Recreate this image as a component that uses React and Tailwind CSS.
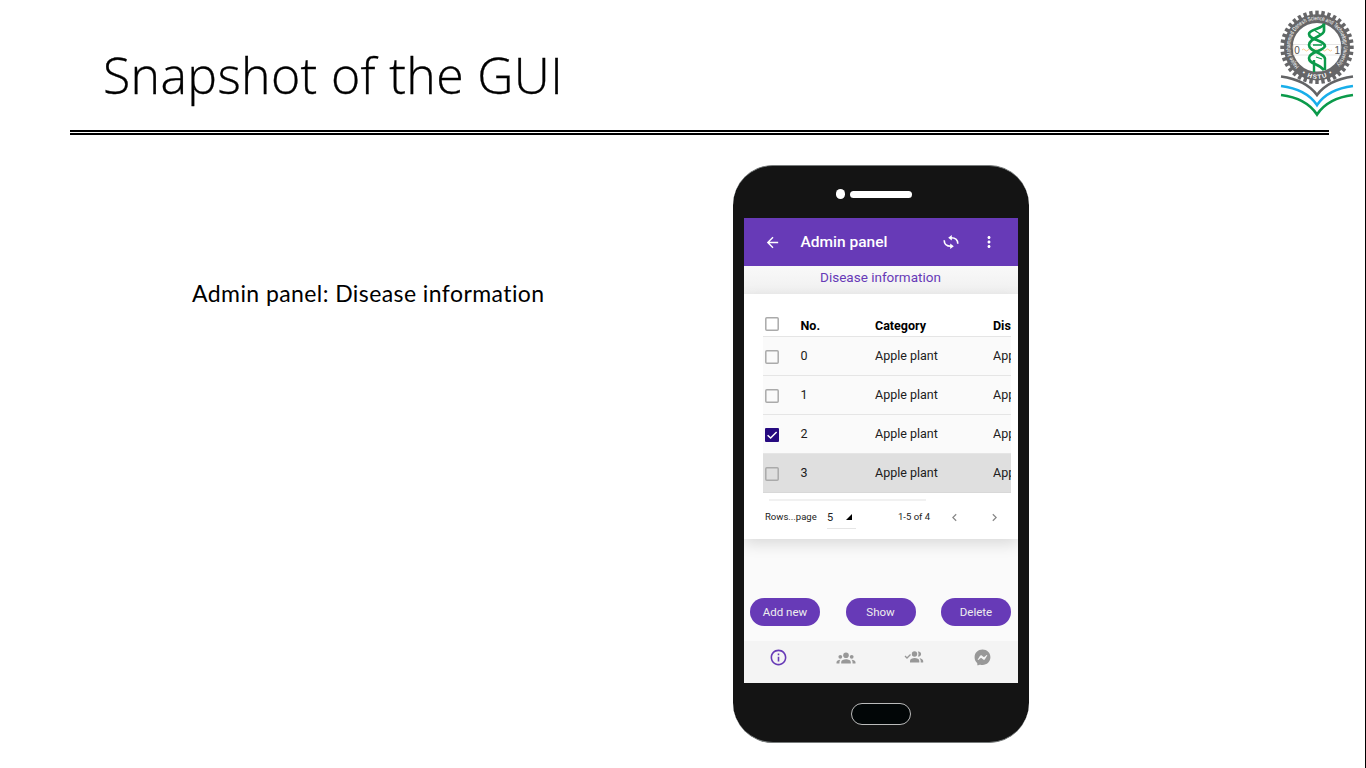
import React from "react";
import { MdArrowBack, MdMoreVert, MdInfoOutline, MdChevronLeft, MdChevronRight } from "react-icons/md";

const rows = [
  { no: "0" },
  { no: "1" },
  { no: "2", checked: true },
  { no: "3", selected: true },
];

function Box({ checked }) {
  return checked ? (
    <span className="flex h-[14px] w-[14px] items-center justify-center rounded-[1px] bg-[#260a80]">
      <svg viewBox="0 0 14 14" className="h-[14px] w-[14px]">
        <path d="M2.600 7.200 5.600 10 11.600 4" fill="none" stroke="#fff" strokeWidth="1.500" />
      </svg>
    </span>
  ) : (
    <svg viewBox="0 0 14 14" className="block h-[14px] w-[14px]">
      <rect x=".8" y=".8" width="12.400" height="12.400" rx="1" fill="none" stroke="#aaa" strokeWidth="1.500" />
    </svg>
  );
}

function Crest() {
  const teeth = Array.from({ length: 36 }, (_, i) => i * 10);
  return (
    <svg viewBox="0 0 74 108" className="h-[108px] w-[74px]">
      <defs>
        <path id="ring" d="M19 56.500 A26.700 26.700 0 1 1 55 56.500" />
        <path id="foot" d="M18 60.500 Q37 77.500 56 60.500" />
      </defs>
      {teeth.map((a) => (
        <rect key={a} x="35.300" y="0.600" width="3.400" height="5" fill="#666668" transform={`rotate(${a} 37 37.300)`} />
      ))}
      <circle cx="37" cy="37.300" r="28.700" fill="none" stroke="#666668" strokeWidth="8.800" />
      <text fontFamily="Liberation Sans, sans-serif" fontSize="6" fill="#fff">
        <textPath href="#ring" textLength="125" lengthAdjust="spacingAndGlyphs">Hajee Mohammad Danesh Science and Technology University</textPath>
      </text>
      <text fontFamily="Liberation Sans, sans-serif" fontSize="6.200" fontWeight="bold" fill="#fff">
        <textPath href="#foot" startOffset="50%" textAnchor="middle" textLength="33">• HSTU •</textPath>
      </text>
      <rect x="13.500" y="34.500" width="47" height="10.500" fill="#fff" stroke="#ccc" strokeWidth=".5" />
      <path d="M22 40q1.500-2 3 0t3 0 3 0 3 0 3 0 3 0 3 0 3 0 3 0 3 0" fill="none" stroke="#f6bd76" strokeWidth=".8" />
      <text x="14.300" y="43.800" fontFamily="Liberation Sans, sans-serif" fontSize="10" fill="#555">0</text>
      <text x="54.500" y="43.800" fontFamily="Liberation Sans, sans-serif" fontSize="10" fill="#555">1</text>
      <g fill="none" stroke="#0b9a4a" strokeLinejoin="round" strokeWidth="2.700">
        <path d="M44 13.500C44 19 29 19 29 24C29 30 45 30 45 36.500" />
        <path d="M44 14V21C44 26 29 28 29 35C29 42 45 43 45 49" />
        <path d="M45 36C44 41 29 42 29 48C29 54 38 53 44 60" />
        <path d="M45 49V60M34 50V62" strokeWidth="2.400" />
        <path d="M34 20 41 24.500M33 35 42 35M36 47 42 49" strokeWidth="1.300" />
      </g>
      <path d="M1 66.500Q26 70 37 85Q48 70 73 66.500" fill="none" stroke="#636466" strokeWidth="2.700" />
      <path d="M1 76Q26 79 37 95Q48 79 73 76" fill="none" stroke="#18aeea" strokeWidth="2.700" />
      <path d="M1 85Q26 88 37 104.500Q48 88 73 85" fill="none" stroke="#0b9a4a" strokeWidth="2.700" />
    </svg>
  );
}

export default function App() {
  return (
    <div className="flex h-[768px] w-[1366px] flex-col overflow-hidden border-r border-black bg-white text-black">
      <header className="flex h-[130px] shrink-0 items-start justify-between pl-[103px] pr-[11px]">
        <h1 className="mt-[38px] whitespace-nowrap font-['Open_Sans'] text-[50px] font-light leading-[74px] tracking-[0.34px] [-webkit-text-stroke:0.3px_black]">Snapshot of the GUI</h1>
        <div className="mt-[10px]"><Crest /></div>
      </header>
      <div className="ml-[70px] h-[5px] w-[1259px] shrink-0 border-y-2 border-black" />
      <main className="flex flex-1 items-start">
        <p className="ml-[192px] mt-[141px] w-[541px] whitespace-nowrap font-['Lato'] text-[23px] leading-[34px] tracking-[0.42px]">Admin panel: Disease information</p>
        <section className="mt-[30px] flex h-[578px] w-[296px] flex-col rounded-[40px] border-y border-[#777b7b] bg-[#141414] px-[11px] font-['Roboto']">
          <div className="flex h-[52px] shrink-0 items-center gap-[5px] pl-[92px] pt-[4px]">
            <span className="h-[10px] w-[9px] rounded-full bg-white" />
            <span className="h-[7px] w-[62px] rounded-full bg-white" />
          </div>
          <div className="flex h-[465px] shrink-0 flex-col overflow-hidden bg-[#fafafa]">
            <div className="flex h-[48px] shrink-0 items-center bg-[#673ab7] text-white">
              <MdArrowBack className="ml-[20px] h-[17px] w-[17px]" />
              <span className="ml-[19.500px] mt-[1px] w-[142.500px] text-[15.500px] font-medium">Admin panel</span>
              <svg viewBox="0 0 16 16" className="h-[16px] w-[16px]">
                <path d="M8 3.800C11.500 3.800 14.800 5.500 14.800 9.800M8 12.200C4.500 12.200 1.200 10.500 1.200 6.200" fill="none" stroke="currentColor" strokeWidth="1.600" />
                <path d="M8.800 1v5.600L5.200 3.800zM7.200 9.400v5.600l3.600-2.800z" fill="currentColor" />
              </svg>
              <MdMoreVert className="ml-[21px] h-[18px] w-[18px]" />
            </div>
            <div className="h-[28px] shrink-0 bg-gradient-to-b from-[#f9f9f9] to-[#f0f0f0] pr-[1px] text-center text-[13.500px] leading-[23px] text-[#673ab7]">Disease information</div>
            <div className="flex h-[245px] shrink-0 flex-col bg-white pl-[19px] pr-[7px] shadow-[0_5px_14px_rgba(0,0,0,0.13)]">
              <div className="grid h-[43px] shrink-0 grid-cols-[37.500px_74.500px_118px_1fr] items-end overflow-hidden border-b border-[#e5e5e5] text-[12.500px] font-bold">
                <span className="mb-[5px] ml-[2px]"><Box /></span>
                <span className="leading-[21px]">No.</span><span className="leading-[21px]">Category</span><span className="overflow-hidden leading-[21px]">Disease</span>
              </div>
              {rows.map((r) => (
                <div key={r.no} className={r.selected ? "grid h-[39px] shrink-0 grid-cols-[37.500px_74.500px_118px_1fr] items-center overflow-hidden border-b border-[#d8d8d8] bg-[#dfdfdf] text-[12.500px] text-[#202020]" : "grid h-[39px] shrink-0 grid-cols-[37.500px_74.500px_118px_1fr] items-center overflow-hidden border-b border-[#e5e5e5] bg-[#fafafa] text-[12.500px] text-[#202020]"}>
                  <span className="ml-[2px] mt-[2px]"><Box checked={r.checked} /></span>
                  <span>{r.no}</span><span>Apple plant</span><span className="overflow-hidden">Apple</span>
                </div>
              ))}
              <div className="ml-[6px] mt-[6px] h-[2px] w-[157px] shrink-0 bg-[#f1f1f1]" />
              <div className="flex h-[33px] items-center text-[9.500px] text-[#222]">
                <span className="ml-[2px] w-[62px] whitespace-nowrap">Rows...page</span>
                <span className="flex h-[22px] w-[29px] items-center justify-between border-b border-[#e5e5e5] pr-[4px] text-[11px]">
                  <span className="mt-[2px]">5</span>
                  <svg viewBox="0 0 6 6" className="h-[6px] w-[6px]"><path d="M6 0v6H0z" fill="#000" /></svg>
                </span>
                <span className="ml-[42px] w-[49px]">1-5 of 4</span>
                <MdChevronLeft className="h-[15px] w-[15px] text-[#888]" />
                <MdChevronRight className="ml-[25px] h-[15px] w-[15px] text-[#888]" />
              </div>
            </div>
            <div className="flex h-[102px] shrink-0 items-end justify-between pb-[15px] pl-[6px] pr-[7px] text-[11.500px] text-[#eee]">
              {["Add new", "Show", "Delete"].map((t) => <button key={t} className="h-[28px] w-[70px] rounded-full bg-[#673ab7] pt-px">{t}</button>)}
            </div>
            <nav className="grid flex-1 grid-cols-4 items-start justify-items-center bg-[#f4f4f4] pr-[2px] pt-[7px] text-[#989898]">
              <MdInfoOutline className="h-[19px] w-[19px] text-[#673ab7]" />
              <svg viewBox="0 0 20 12" className="mt-[4px] h-[12px] w-[20px]" fill="currentColor">
                <circle cx="10" cy="3.200" r="2.800" /><circle cx="4.300" cy="4.800" r="1.900" /><circle cx="15.700" cy="4.800" r="1.900" />
                <path d="M5.200 11.500v-1.400c0-2 2.600-2.900 4.800-2.900s4.800.9 4.800 2.900v1.400zM.5 11.500v-1.200c0-1.500 1.800-2.400 4-2.600-.7.700-1 1.500-1 2.400v1.400zM19.500 11.500v-1.200c0-1.500-1.800-2.400-4-2.600.7.700 1 1.500 1 2.400v1.400z" />
              </svg>
              <svg viewBox="0 0 20 16" className="mt-[1px] h-[16px] w-[20px]" fill="currentColor"><circle cx="10.500" cy="5" r="2.700" /><path d="M13.800 2.500a2.600 2.600 0 1 1 0 5c1-1.500 1-3.500 0-5M6 13.500V12c0-2 2.500-2.900 4.700-2.900s4.600.9 4.600 2.900v1.500zM15.300 9.200c2.200.3 3.900 1.200 3.900 2.800v1.500h-2.500V12c0-1.100-.5-2-1.400-2.800" /><path d="m1 7 2 2L6.500 5.500" fill="none" stroke="currentColor" strokeWidth="1.300" /></svg>
              <svg viewBox="0 0 24 24" className="h-[19px] w-[19px]" fill="currentColor"><path d="M12 2C6.360 2 2 6.130 2 11.700c0 2.910 1.190 5.440 3.140 7.170.160.130.260.350.270.570l.05 1.780c.04.570.610.940 1.130.710l1.980-.870c.170-.060.360-.090.530-.060.900.270 1.900.400 2.900.400 5.640 0 10-4.130 10-9.700C22 6.130 17.640 2 12 2m6 7.460-2.930 4.670c-.470.730-1.470.920-2.170.370l-2.340-1.730a.6.6 0 0 0-.720 0l-3.160 2.400c-.420.330-.970-.170-.680-.630l2.930-4.670c.470-.730 1.470-.920 2.170-.400l2.340 1.760c.210.170.510.170.720 0l3.160-2.400c.420-.330.970.170.680.630" /></svg>
            </nav>
          </div>
          <div className="mt-[20px] flex justify-center"><span className="h-[22px] w-[60px] rounded-full border border-[#bbb] bg-[#020607]" /></div>
        </section>
      </main>
    </div>
  );
}
